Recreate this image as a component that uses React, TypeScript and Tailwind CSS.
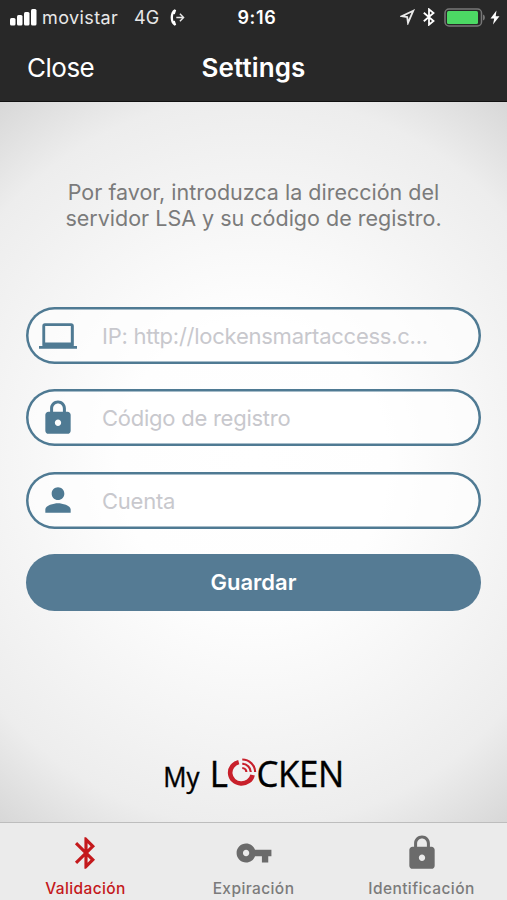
import type { ReactNode } from "react";

const LOCK = "M18 8h-1V6c0-2.76-2.24-5-5-5S7 3.24 7 6v2H6c-1.1 0-2 .9-2 2v10c0 1.1.9 2 2 2h12c1.1 0 2-.9 2-2V10c0-1.1-.9-2-2-2zm-6 9c-1.1 0-2-.9-2-2s.9-2 2-2 2 .9 2 2-.9 2-2 2zm3.1-9H8.9V6c0-1.71 1.39-3.1 3.1-3.1 1.71 0 3.1 1.39 3.1 3.1v2z";
const BLUETOOTH = "M17.71 7.71 12 2h-1v7.59L6.41 5 5 6.41 10.59 12 5 17.59 6.41 19 11 14.41V22h1l5.71-5.71-4.3-4.29 4.3-4.29zM13 5.83l1.88 1.88L13 9.59V5.83zm1.88 10.46L13 18.17v-3.76l1.88 1.88z";
const PERSON = "M12 12c2.21 0 4-1.79 4-4s-1.79-4-4-4-4 1.79-4 4 1.79 4 4 4zm0 2c-2.67 0-8 1.34-8 4v2h16v-2c0-2.66-5.33-4-8-4z";
const LAPTOP = "M3.7 4h16.6c1 0 1.7.7 1.7 1.7v12c0 .2 0 .4-.1.6H24V20H0v-1.7h2.2c-.1-.2-.1-.4-.1-.6v-12C2.1 4.7 2.7 4 3.7 4zm.2 1.7v10.4h16.2V5.7z";
const KEY = "M12.65 10C11.83 7.67 9.61 6 7 6c-3.31 0-6 2.69-6 6s2.69 6 6 6c2.61 0 4.83-1.67 5.65-4H17v4h4v-4h2v-4H12.65zM7 14c-1.1 0-2-.9-2-2s.9-2 2-2 2 .9 2 2-.9 2-2 2z";

function Icon({ path, className }: { path: string; className: string }) {
  return (
    <svg viewBox="0 0 24 24" fill="currentColor" className={className}>
      <path d={path} />
    </svg>
  );
}

function StatusBar() {
  return (
    <div className="grid h-[34px] grid-cols-3 items-center text-[18px] text-[#e8e8e8]">
      <div className="flex items-center pl-[10px]">
        <svg viewBox="0 0 27 17" fill="#fff" className="h-[17px] w-[27px] shrink-0">
          <rect x="0" y="9" width="5.5" height="7.5" rx="1.5" />
          <rect x="7" y="6" width="5.5" height="10.5" rx="1.5" />
          <rect x="14" y="3" width="5.5" height="13.5" rx="1.5" />
          <rect x="21" y="0" width="5.5" height="16.5" rx="1.5" />
        </svg>
        <span className="ml-[5px] w-[92px] shrink-0 tracking-[0.4px]">movistar</span>
        <span className="w-[36px] shrink-0">4G</span>
        <svg viewBox="0 0 15 17" fill="none" className="h-[17px] w-[15px] shrink-0">
          <path d="M4.6.3C-.7 3-.7 14 4.6 16.7l1.6-1-1.4-3.9-1.3.2C2.8 9.7 2.8 7.3 3.5 5l1.3.2 1.4-3.9z" fill="#fff" />
          <path d="M6.3 8.5h7.2M9.9 4.8l3.7 3.7-3.7 3.7" stroke="#e8e8e8" strokeWidth="1.4" />
        </svg>
      </div>
      <div className="pl-[7px] text-center font-semibold tracking-[0.7px] text-white">9:16</div>
      <div className="flex items-center justify-end pr-[7px]">
        <svg viewBox="0 0 15 16" fill="none" stroke="#e8e8e8" strokeWidth="1.8" className="h-[16px] w-[15px]">
          <path d="M13.3 1.7 1.8 7.2l5.4.9.8 5.8z" />
        </svg>
        <svg viewBox="0 0 12 18" fill="none" stroke="#fff" strokeWidth="1.8" className="ml-[8px] h-[18px] w-[12px]">
          <path d="M.8 4.7 10.5 13 6 16.7V1.3L10.5 5 .8 13.3" />
        </svg>
        <svg viewBox="0 0 42 19" className="ml-[9px] h-[19px] w-[42px]">
          <rect x="1" y="1" width="36.5" height="17" rx="4" fill="none" stroke="#777" strokeWidth="1.5" />
          <rect x="3" y="3" width="31" height="13" rx="1.5" fill="#4cd964" />
          <path d="M39 6.5c2.5.5 2.5 5.5 0 6z" fill="#777" />
        </svg>
        <svg viewBox="0 0 10 15" fill="#fff" className="ml-[4px] h-[15px] w-[10px]">
          <path d="M6.5.5.5 8.5h3.7L3 14.5l6.5-8.3H5.7z" />
        </svg>
      </div>
    </div>
  );
}

function Field({ icon, placeholder }: { icon: string; placeholder: string }) {
  return (
    <div className="flex h-[57px] items-center rounded-full bg-white/60 pl-[13px] text-[#4f7a93] shadow-[inset_0_0_0_2.5px_#4f7a93]">
      <Icon path={icon} className="h-[38px] w-[38px] shrink-0" />
      <input
        placeholder={placeholder}
        className="ml-[25px] w-[350px] bg-transparent pt-[2px] text-[22px] tracking-[-0.25px] outline-none placeholder:text-[#c8c8cd]"
      />
    </div>
  );
}

function Tab({ label, active, children }: { label: string; active?: boolean; children: ReactNode }) {
  return (
    <button className={`flex w-[168px] flex-col items-center pt-[10px] ${active ? "text-[#c4191c]" : "text-[#6b6b6b]"}`}>
      <span className="flex h-[40px] items-center">{children}</span>
      <span className={`mt-[5px] text-[15.5px] leading-[22px] font-medium tracking-[0.4px] ${active ? "" : "text-[#7b7b7b]"}`}>
        {label}
      </span>
    </button>
  );
}

function Logo() {
  return (
    <div className="flex origin-center scale-x-[0.94] items-baseline justify-center font-['Open_Sans',sans-serif] leading-[48px] text-black [-webkit-text-stroke:0.4px_black]">
      <span className="text-[27.5px]">My</span>
      <span className="ml-[11px] text-[37px] tracking-[-1.5px]">L</span>
      <svg viewBox="0 0 30 30" fill="none" preserveAspectRatio="none" className="h-[29px] w-[32px]">
        <path d="M12 4.2A11.3 11.3 0 1 0 25.8 17.5" stroke="#c8202b" strokeWidth="4.6" />
        <path d="M15.5 1.6A13 13 0 0 1 28.4 14.5M15.5 6A8.8 8.8 0 0 1 24 14.5M15.5 10.4A4.2 4.2 0 0 1 19.6 14.5" stroke="#c8202b" strokeWidth="2.2" />
      </svg>
      <span className="text-[37px] tracking-[-0.4px]">CKEN</span>
    </div>
  );
}

export default function App() {
  return (
    <div className="flex h-[900px] w-[507px] flex-col overflow-hidden font-['Inter',sans-serif]">
      <header className="h-[102px] shrink-0 border-b border-[#111] bg-[#282828] text-white">
        <StatusBar />
        <div className="grid h-[67px] grid-cols-3 items-center text-[26px]">
          <button className="pl-[27px] text-left tracking-[-0.5px]">Close</button>
          <h1 className="text-center font-semibold tracking-[0.1px]">Settings</h1>
        </div>
      </header>

      <main className="flex flex-1 flex-col bg-[radial-gradient(ellipse_450px_480px_at_50%_50%,#ffffff_0%,#fefefe_30%,#f4f4f4_57%,#ededed_76%,#d6d6d6_95%)] px-[26px]">
        <p className="mt-[77px] h-[52px] text-center text-[21.5px] leading-[26px] whitespace-pre text-[#7b7b7b]">
          Por favor, introduzca la dirección del{"\n"}servidor LSA y su código de registro.
        </p>
        <form className="mt-[76px] flex flex-col gap-[25.3px]">
          <Field icon={LAPTOP} placeholder="IP: http://lockensmartaccess.c..." />
          <Field icon={LOCK} placeholder="Código de registro" />
          <Field icon={PERSON} placeholder="Cuenta" />
          <button type="button" className="h-[57px] rounded-full bg-[#557b94] pt-px text-[22px] font-semibold text-white">
            Guardar
          </button>
        </form>
        <div className="mt-[138px]">
          <Logo />
        </div>
      </main>

      <nav className="flex h-[78px] shrink-0 justify-center border-t border-[#bdbdbd] bg-[#ebebeb]">
        <Tab label="Validación" active>
          <Icon path={BLUETOOTH} className="h-[38px] w-[38px]" />
        </Tab>
        <Tab label="Expiración">
          <Icon path={KEY} className="h-[38px] w-[38px]" />
        </Tab>
        <Tab label="Identificación">
          <Icon path={LOCK} className="h-[38px] w-[38px]" />
        </Tab>
      </nav>
    </div>
  );
}
